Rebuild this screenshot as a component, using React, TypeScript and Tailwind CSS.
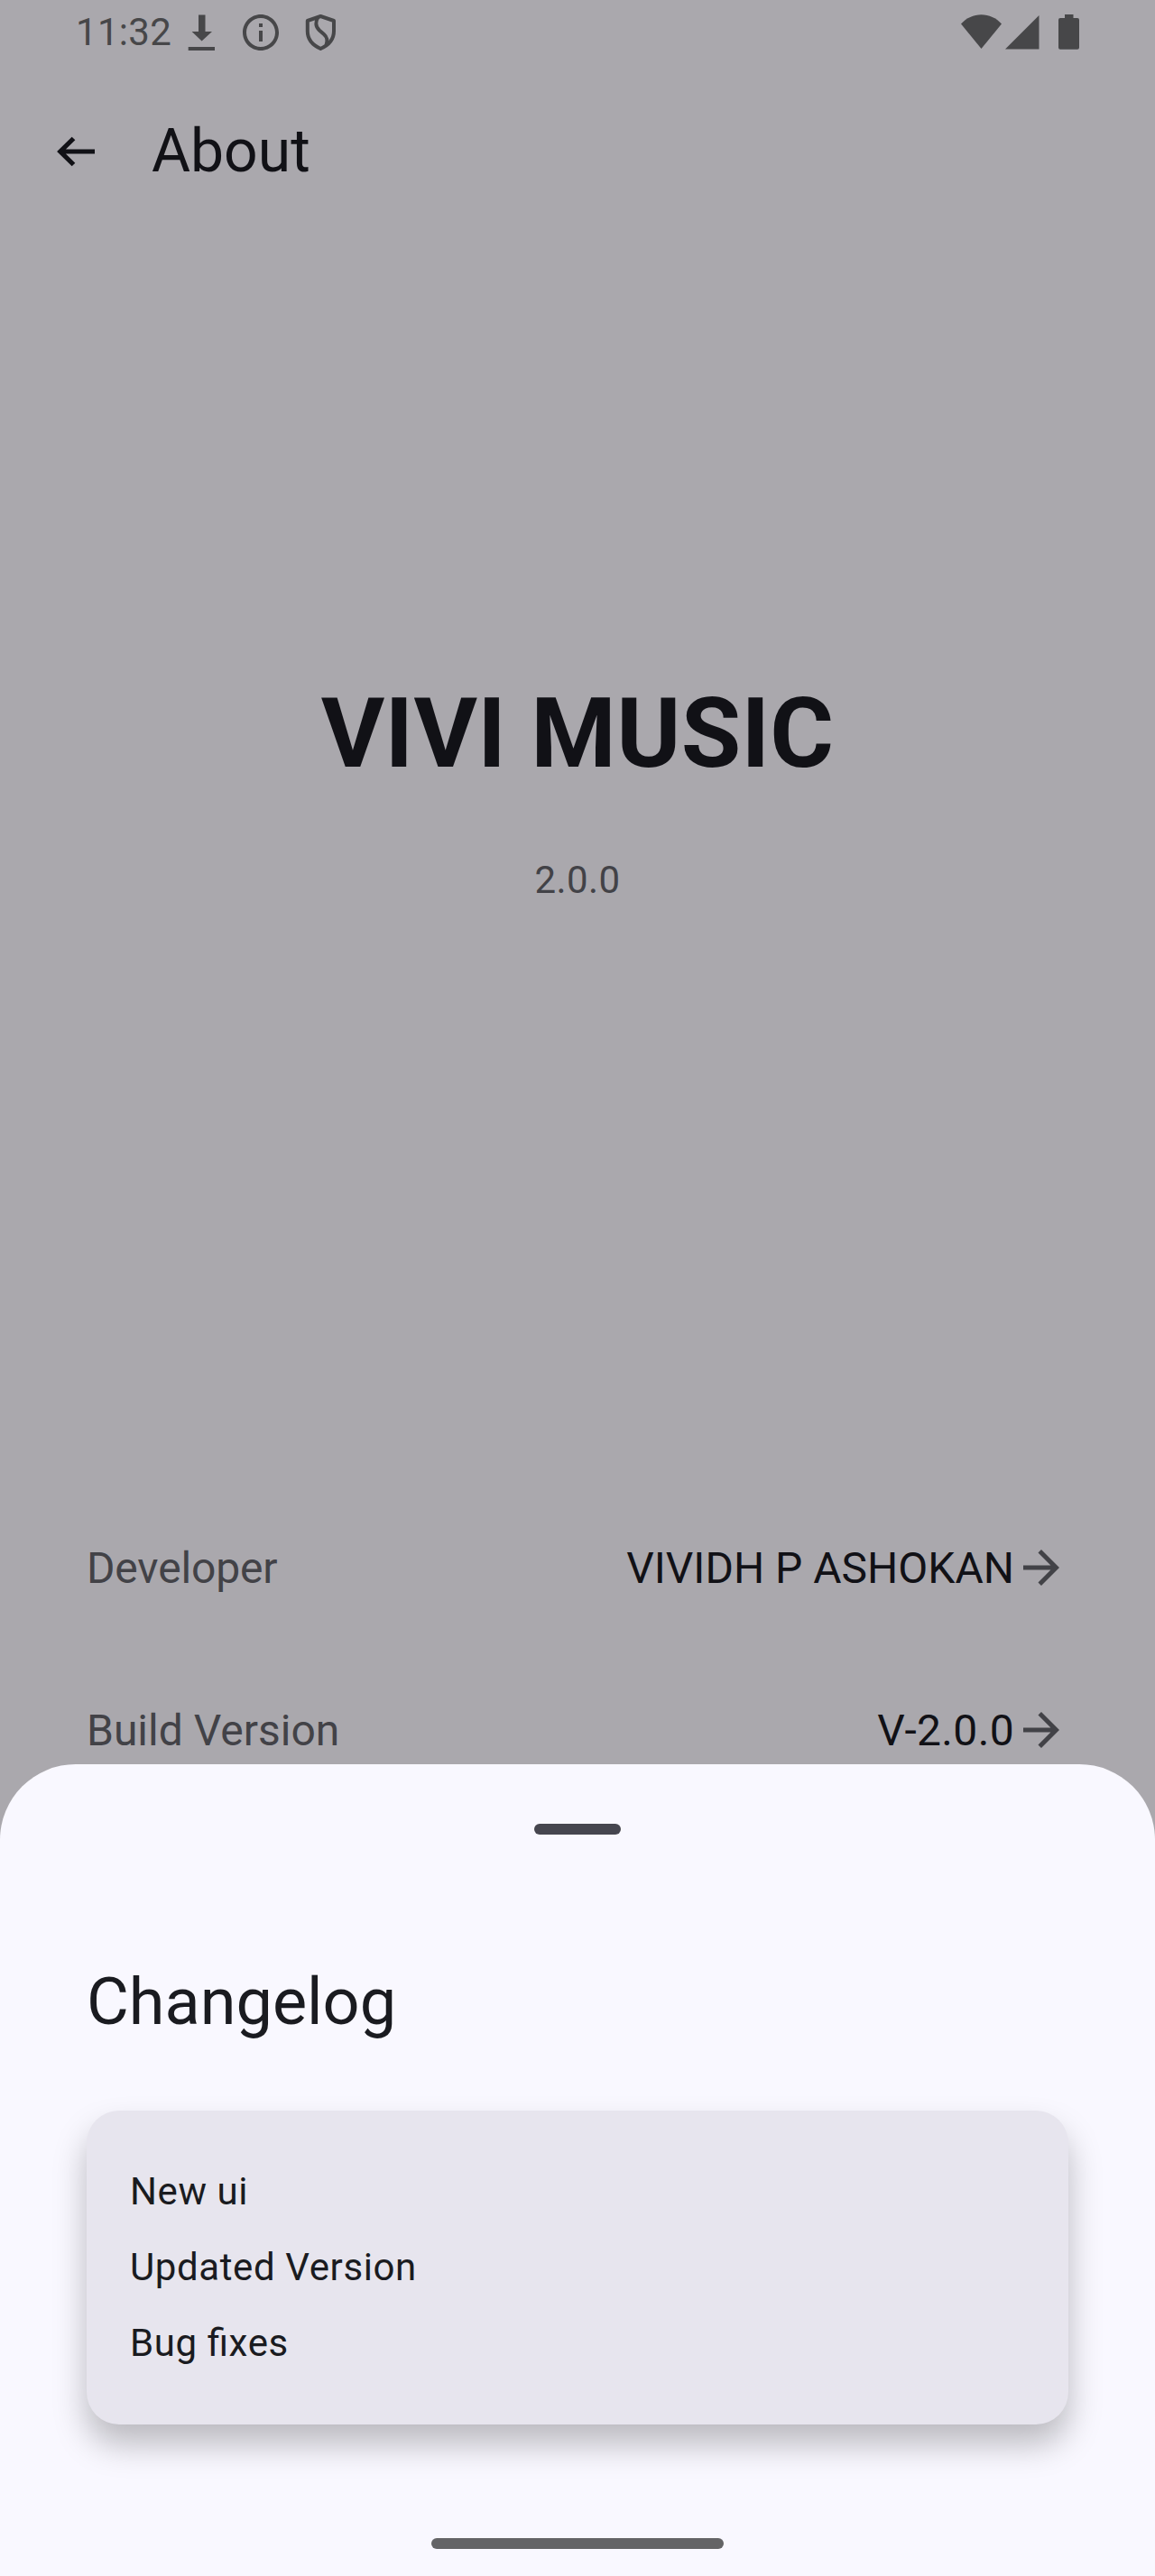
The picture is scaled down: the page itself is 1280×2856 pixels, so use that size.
const details = [
  { label: "Developer", value: "VIVIDH P ASHOKAN", labelClass: "tracking-[-0.15px]", valueClass: "" },
  { label: "Build Version", value: "V-2.0.0", labelClass: "", valueClass: "tracking-[0.35px]" },
];

const changes = ["New ui", "Updated Version", "Bug fixes"];

function DownloadIcon() {
  return (
    <svg className="ml-[20px] h-12 w-[30px] shrink-0" viewBox="0 0 30 48" fill="currentColor">
      <path d="M12 4.500h7.500V23H27L15.600 33.500 4.600 23H12zM.7 40h29.300v4H.7z" />
    </svg>
  );
}

function InfoIcon() {
  return (
    <svg className="ml-[27px] size-12 shrink-0" viewBox="0 0 24 24" fill="currentColor">
      <path d="M11 7h2v2h-2zm0 4h2v6h-2zm1-9C6.480 2 2 6.480 2 12s4.480 10 10 10 10-4.480 10-10S17.520 2 12 2zm0 18c-4.410 0-8-3.590-8-8s3.590-8 8-8 8 3.590 8 8-3.590 8-8 8z" />
    </svg>
  );
}

function ShieldIcon() {
  return (
    <svg className="ml-[24px] h-12 w-[36px] shrink-0" viewBox="0 0 36 48" fill="none" stroke="currentColor" strokeWidth="4" strokeLinejoin="round">
      <path d="M18.300 6 3.800 11v11.500c0 9 5.500 15.500 14.500 19.500 9-4 14.700-10.500 14.700-19.500V11z" />
      <path d="M15.500 7c-3.200 5-3 10.500 1.300 14.500l5.200 4.500c4 3.500 4.200 7.500 2.500 12" />
    </svg>
  );
}

function StatusBar() {
  return (
    <div className="flex h-[72px] items-center pl-[84px] pr-[84px] text-[#474749]">
      <span className="w-[104px] text-[42px] leading-[60px] tracking-[0.300px]">11:32</span>
      <DownloadIcon />
      <InfoIcon />
      <ShieldIcon />
      <div className="ml-auto flex items-center">
        <svg className="h-12 w-[45px]" viewBox="0 0 45 48" fill="currentColor">
          <path d="M0 14.500C6 8 14 4.300 22.500 4.300S39 8 45 14.500L22.500 42z" />
        </svg>
        <svg className="ml-1 h-12 w-[38px]" viewBox="0 0 38 48" fill="currentColor">
          <path d="M0 42.500 37.500 5v37.500z" />
        </svg>
        <svg className="ml-[21px] h-12 w-[23px]" viewBox="0 0 23 48" fill="currentColor">
          <path d="M7 4h9.500v4H21a2 2 0 0 1 2 2v30.700a2 2 0 0 1-2 2H2a2 2 0 0 1-2-2V10a2 2 0 0 1 2-2h5z" />
        </svg>
      </div>
    </div>
  );
}

function ForwardArrow() {
  return (
    <svg className="size-[60px] shrink-0 text-[#424247]" viewBox="0 0 24 24" fill="currentColor">
      <path d="m12 4-1.410 1.410L16.170 11H4v2h12.170l-5.580 5.590L12 20l8-8z" />
    </svg>
  );
}

export default function App() {
  return (
    <div className="relative flex h-[2856px] w-[1280px] flex-col overflow-hidden bg-[#aaa8ad] font-['Roboto',sans-serif] text-[#111116]">
      <StatusBar />

      <header className="flex h-48 items-center pl-12">
        <svg className="h-[72px] w-[72px] shrink-0" viewBox="0 0 72 72" fill="none" stroke="currentColor" strokeWidth="5.200">
          <path d="M57 36H18M33.500 21.500 18.800 36l14.700 14.500" />
        </svg>
        <h1 className="ml-12 text-[66px] leading-[84px]">About</h1>
      </header>

      <section className="flex flex-col items-center pt-[483px]">
        <h2 className="text-[108px] font-bold leading-[132px] tracking-[0.300px]">VIVI MUSIC</h2>
        <p className="mt-[67px] text-[42px] leading-[60px] tracking-[0.400px] text-[#424247]">2.0.0</p>
      </section>

      <dl className="mt-[642px] flex flex-col px-24">
        {details.map((row) => (
          <div key={row.label} className="flex h-[180px] items-center text-[48px] leading-[72px]">
            <dt className={`pt-0.5 text-[#424247] ${row.labelClass}`}>{row.label}</dt>
            <dd className="ml-auto flex items-center">
              <span className={`pt-0.5 ${row.valueClass}`}>{row.value}</span>
              <ForwardArrow />
            </dd>
          </div>
        ))}
      </dl>

      <section className="absolute inset-x-0 bottom-0 flex h-[900px] flex-col rounded-t-[84px] bg-[#f9f8ff] px-24 text-[#1a1b20]">
        <div className="mt-[66px] h-3 w-24 shrink-0 self-center rounded-full bg-[#46464f]" />
        <h2 className="mt-[138px] text-[72px] leading-[96px]">Changelog</h2>
        <ul className="mt-[72px] rounded-[36px] bg-[#e7e5ee] p-12 shadow-[0_22px_36px_rgba(0,0,0,0.25)]">
          {changes.map((change) => (
            <li key={change} className="py-3 text-[42px] leading-[60px] tracking-[0.600px] [font-feature-settings:'liga'_1]">
              {change}
            </li>
          ))}
        </ul>
        <div className="mb-[30px] mt-auto h-3 w-[324px] shrink-0 self-center rounded-full bg-[#646466]" />
      </section>
    </div>
  );
}
